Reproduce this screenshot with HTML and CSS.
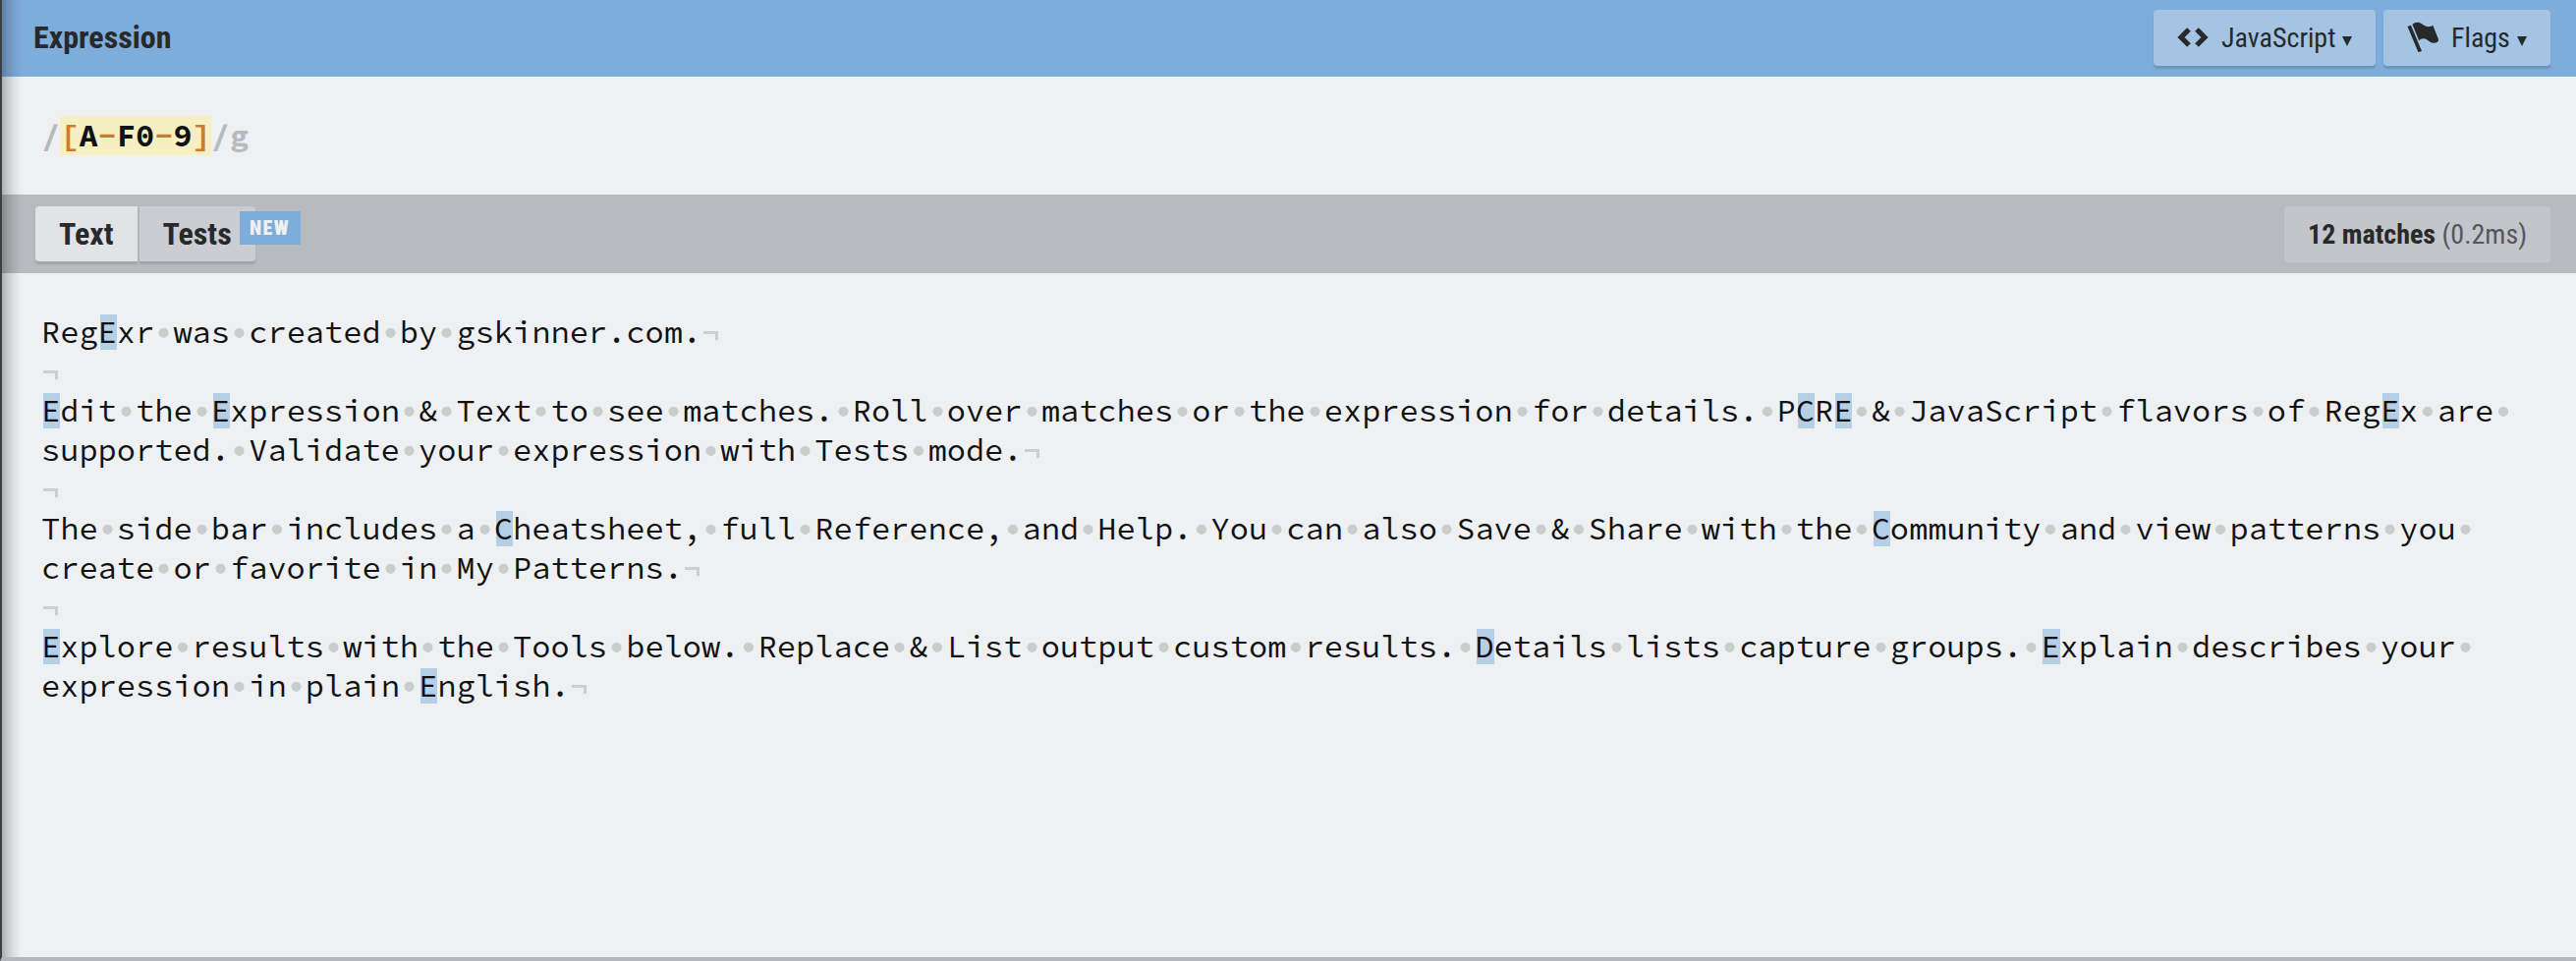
FILE: index.html
```html
<!DOCTYPE html>
<html lang="en">
<head>
<meta charset="utf-8">
<title>RegExr</title>
<link rel="stylesheet" href="styles.css">
</head>
<body>
<main class="doc">
  <header class="bar bar-primary">
    <h1 class="title">Expression</h1>
    <div class="actions">
      <div class="button button-flavor">
        <svg class="icon icon-code" width="32" height="20" viewBox="0 0 32 20"><path d="M12 2 4 10l8 8M20 2l8 8-8 8" fill="none" stroke="#27292a" stroke-width="5.200"/></svg>
        <span class="label">JavaScript</span><svg class="caret" width="10" height="10" viewBox="0 0 10 10"><path d="M0 0h10L5 10z" fill="#27292a"/></svg>
      </div>
      <div class="button button-flags">
        <svg class="icon icon-flag" width="32" height="32" viewBox="0 0 32 32"><path d="M.5 5 4 3.700 15 30 11.500 31.300z"/><path d="M5.500 3C8 .2 12 .2 15 2.300c4 3 8 4 11.300 1.500L32 18c.4 2.500-2 4-5 3.800-4.500-.2-6-4.500-10-4.600-2.500 0-3.700.7-4.800 2z"/></svg>
        <span class="label">Flags</span><svg class="caret" width="10" height="10" viewBox="0 0 10 10"><path d="M0 0h10L5 10z" fill="#27292a"/></svg>
      </div>
    </div>
  </header>

  <section class="expression"><span class="delim">/</span><span class="set"><span class="op">[</span>A<span class="op">-</span>F0<span class="op">-</span>9<span class="op">]</span></span><span class="delim">/g</span></section>

  <div class="bar bar-secondary">
    <nav class="tabs">
      <div class="tab tab-active">Text</div>
      <div class="tab">Tests<span class="badge">NEW</span></div>
    </nav>
    <div class="result"><b>12 matches</b> <span class="time">(0.2ms)</span></div>
  </div>

  <section class="text">
<div class="line">Reg<mark>E</mark>xr<i> </i>was<i> </i>created<i> </i>by<i> </i>gskinner.com.<u></u></div>
<div class="line"><u></u></div>
<div class="line"><mark>E</mark>dit<i> </i>the<i> </i><mark>E</mark>xpression<i> </i>&amp;<i> </i>Text<i> </i>to<i> </i>see<i> </i>matches.<i> </i>Roll<i> </i>over<i> </i>matches<i> </i>or<i> </i>the<i> </i>expression<i> </i>for<i> </i>details.<i> </i>P<mark>C</mark>R<mark>E</mark><i> </i>&amp;<i> </i>JavaScript<i> </i>flavors<i> </i>of<i> </i>Reg<mark>E</mark>x<i> </i>are<i> </i></div>
<div class="line">supported.<i> </i>Validate<i> </i>your<i> </i>expression<i> </i>with<i> </i>Tests<i> </i>mode.<u></u></div>
<div class="line"><u></u></div>
<div class="line">The<i> </i>side<i> </i>bar<i> </i>includes<i> </i>a<i> </i><mark>C</mark>heatsheet,<i> </i>full<i> </i>Reference,<i> </i>and<i> </i>Help.<i> </i>You<i> </i>can<i> </i>also<i> </i>Save<i> </i>&amp;<i> </i>Share<i> </i>with<i> </i>the<i> </i><mark>C</mark>ommunity<i> </i>and<i> </i>view<i> </i>patterns<i> </i>you<i> </i></div>
<div class="line">create<i> </i>or<i> </i>favorite<i> </i>in<i> </i>My<i> </i>Patterns.<u></u></div>
<div class="line"><u></u></div>
<div class="line"><mark>E</mark>xplore<i> </i>results<i> </i>with<i> </i>the<i> </i>Tools<i> </i>below.<i> </i>Replace<i> </i>&amp;<i> </i>List<i> </i>output<i> </i>custom<i> </i>results.<i> </i><mark>D</mark>etails<i> </i>lists<i> </i>capture<i> </i>groups.<i> </i><mark>E</mark>xplain<i> </i>describes<i> </i>your<i> </i></div>
<div class="line">expression<i> </i>in<i> </i>plain<i> </i><mark>E</mark>nglish.<u></u></div>
  </section>
</main>
</body>
</html>
```
FILE: styles.css
```css
* { box-sizing: border-box; }

body {
  margin: 0;
  background: #eff0f2;
  color: #27292a;
  font-family: "Roboto Condensed", Roboto, sans-serif;
}

.doc {
  position: relative;
  display: flex;
  flex-direction: column;
  height: 978px;
  border-left: 2px solid #3d3e44;
  border-bottom: 4px solid #b6b7bd;
  overflow: hidden;
}

/* shade cast by the sidebar on the left edge */
.doc::after {
  content: "";
  position: absolute;
  left: 0;
  top: 0;
  bottom: -4px;
  width: 22px;
  background: linear-gradient(to right, rgba(0,0,0,.27), rgba(0,0,0,.17) 25%, rgba(0,0,0,.07) 55%, rgba(0,0,0,.02) 80%, rgba(0,0,0,0));
}

.bar {
  flex: none;
  display: flex;
  justify-content: space-between;
}

.bar-primary {
  height: 78px;
  padding: 10px 26px 0 32px;
  background: #7eaddc;
}

.title {
  margin: 0;
  font-size: 32px;
  line-height: 56px;
  font-weight: 700;
}

.actions { display: flex; gap: 8px; }

.button {
  display: flex;
  height: 57px;
  padding-left: 24px;
  border-radius: 4px;
  background: #a5c4e3;
  box-shadow: 0 3px 2px rgba(0,0,0,.14);
  font-size: 28px;
  line-height: 57px;
}

.button-flavor { width: 226px; }
.button-flags { width: 170px; }

.icon { flex: none; fill: #27292a; }
.icon-code { margin: 18px 13px 0 0; }
.icon-flag { margin: 12px 13px 0 0; }
.caret { margin: 27px 0 0 7px; }

.expression {
  flex: none;
  height: 120px;
  padding: 40px 0 0 40px;
  color: #101213;
  font: 700 32px/40px "Source Code Pro", monospace;
  white-space: pre;
}

.delim { color: #b7babf; }
.set { background: #f5efc1; }
.op { color: #d07b2c; }

.bar-secondary {
  height: 80px;
  padding: 12px 26px 0 34px;
  background: #b7babf;
}

.tabs { display: flex; gap: 2px; }

.tab {
  position: relative;
  height: 56px;
  padding: 0 24px;
  background: #cccdd2;
  border-radius: 0 4px 4px 0;
  box-shadow: 0 3px 2px rgba(0,0,0,.12);
  font-size: 32px;
  line-height: 56px;
  font-weight: 700;
}

.tab-active { background: #e2e3e5; border-radius: 4px 0 0 4px; }

.badge {
  position: absolute;
  left: 102px;
  top: 5px;
  width: 62px;
  height: 34px;
  background: #7eaddc;
  color: #eff0f2;
  font-size: 20px;
  font-weight: 900;
  line-height: 34px;
  letter-spacing: 1.400px;
  text-align: center;
}

.result {
  width: 271px;
  height: 57px;
  padding-left: 24px;
  border-radius: 4px;
  background: #c3c5ca;
  font-size: 28px;
  line-height: 57px;
  white-space: nowrap;
}

.time { color: #55575a; }

.text {
  flex: 1;
  padding: 40px 0 0 40px;
  color: #101213;
  font: 400 32px/40px "Source Code Pro", monospace;
}

.line { height: 40px; white-space: pre; }

.line mark {
  color: inherit;
  background: linear-gradient(#b6cfe7, #b6cfe7) 2px 50% / 18px 36px no-repeat;
}

.line i {
  font-style: normal;
  background: radial-gradient(circle at 50% 52%, #cbcccc 4.600px, transparent 5.400px);
}

.line u {
  display: inline-block;
  width: 15px;
  height: 9px;
  margin-left: 2px;
  border: solid #cdcecf;
  border-width: 3px 3px 0 0;
  vertical-align: 3px;
}
```
